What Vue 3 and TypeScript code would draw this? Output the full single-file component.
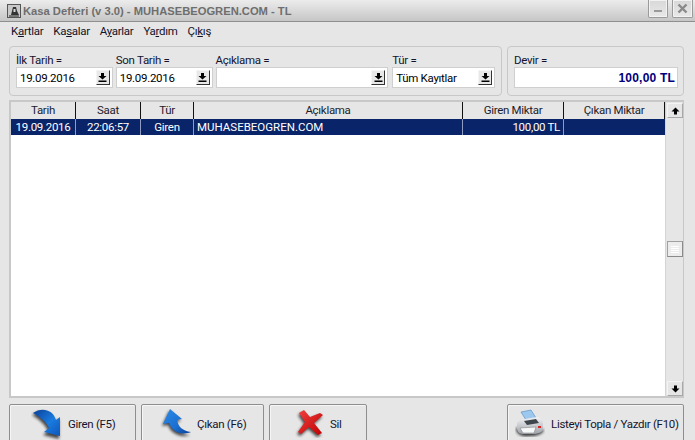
<script setup lang="ts">
const filters = [
  { label: 'İlk Tarih =', value: '19.09.2016', cls: 'f-date' },
  { label: 'Son Tarih =', value: '19.09.2016', cls: 'f-date' },
  { label: 'Açıklama =', value: '', cls: 'f-desc' },
  { label: 'Tür =', value: 'Tüm Kayıtlar', cls: 'f-type' },
]
const menus = [
  ['K', 'a', 'rtlar'],
  ['Ka', 's', 'alar'],
  ['A', 'y', 'arlar'],
  ['Ya', 'r', 'dım'],
  ['Çı', 'k', 'ış'],
]
const cols = [
  { t: 'Tarih', w: 65 },
  { t: 'Saat', w: 65 },
  { t: 'Tür', w: 53 },
  { t: 'Açıklama', w: 269 },
  { t: 'Giren Miktar', w: 101 },
  { t: 'Çıkan Miktar', w: 101 },
]
</script>

<template>
  <div class="win">
    <header class="title">
      <div class="title-left">
        <span class="app-icon">
          <svg width="14" height="14" viewBox="0 0 14 14">
            <rect x="0.5" y="0.5" width="13" height="13" fill="#c9c9c9" stroke="#555" />
            <path d="M4 11 L6 3 H9 L10 7 L12 11 Z" fill="#333" />
            <path d="M6.5 5 H8.5 V8 H6.5 Z" fill="#ddd" />
            <path d="M2 12 H12" stroke="#222" />
          </svg>
        </span>
        <span class="title-text">Kasa Defteri (v 3.0) - MUHASEBEOGREN.COM - TL</span>
      </div>
      <div class="win-btns">
        <span class="win-btn"><i class="min"></i></span>
        <span class="win-btn wide-btn">
          <svg width="11" height="11" viewBox="0 0 11 11"><path d="M1.5 1.5 L9.5 9.5 M9.5 1.5 L1.5 9.5" stroke="#8a8a8a" stroke-width="2.4" /></svg>
        </span>
      </div>
    </header>

    <nav class="menu">
      <span v-for="m in menus" :key="m.join('')" class="menu-item">{{ m[0] }}<u>{{ m[1] }}</u>{{ m[2] }}</span>
    </nav>

    <section class="panels">
      <div class="panel filters">
        <div v-for="f in filters" :key="f.label" class="field" :class="f.cls">
          <label>{{ f.label }}</label>
          <div class="input">
            <span class="val">{{ f.value }}</span>
            <span class="drop">
              <svg width="9" height="9" viewBox="0 0 9 9"><path d="M3 0 H6 V3 H8.5 L4.5 6.5 L0.5 3 H3 Z M0.5 7.5 H8.5 V9 H0.5 Z" fill="#000" /></svg>
            </span>
          </div>
        </div>
      </div>
      <div class="panel devir">
        <label>Devir =</label>
        <div class="input devir-val">100,00 TL</div>
      </div>
    </section>

    <section class="grid">
      <div class="table">
        <div class="row head">
          <div v-for="c in cols" :key="c.t" class="cell" :style="{ width: c.w + 'px' }">{{ c.t }}</div>
        </div>
        <div class="row sel">
          <div class="cell" style="width: 65px">19.09.2016</div>
          <div class="cell" style="width: 65px">22:06:57</div>
          <div class="cell" style="width: 53px">Giren</div>
          <div class="cell left" style="width: 269px">MUHASEBEOGREN.COM</div>
          <div class="cell right" style="width: 101px">100,00 TL</div>
          <div class="cell" style="width: 101px"></div>
        </div>
      </div>
      <div class="scroll">
        <span class="sbtn">
          <svg width="9" height="8" viewBox="0 0 9 8"><path d="M4.5 0.5 L8.5 4.5 H6 V7.5 H3 V4.5 H0.5 Z" fill="#000" /></svg>
        </span>
        <span class="thumb"><i></i><i></i><i></i><i></i></span>
        <span class="sbtn">
          <svg width="9" height="8" viewBox="0 0 9 8"><path d="M4.5 7.5 L8.5 3.5 H6 V0.5 H3 V3.5 H0.5 Z" fill="#000" /></svg>
        </span>
      </div>
    </section>

    <footer class="actions">
      <button class="btn b-giren">
        <svg class="ico" width="34" height="32" viewBox="0 0 34 32">
          <defs>
            <linearGradient id="gb" x1="0" y1="0" x2="1" y2="1">
              <stop offset="0" stop-color="#0a3f96" /><stop offset=".55" stop-color="#1a7be0" /><stop offset="1" stop-color="#0d55b8" />
            </linearGradient>
            <filter id="sh" x="-30%" y="-30%" width="160%" height="160%"><feGaussianBlur stdDeviation="1.4" /></filter>
          </defs>
          <path d="M2 5 C10 -1 22 1 25 12 L29 9 L29 29 L13 25 L18 21 C15 14 9 9 2 5 Z" fill="#000" opacity=".7" filter="url(#sh)" transform="translate(-1 2)" />
          <path d="M2 5 C10 -1 22 1 25 12 L29 9 L29 28 L13 24 L18 20 C15 13 9 9 2 5 Z" fill="url(#gb)" />
        </svg>
        <span>Giren (F5)</span>
      </button>
      <button class="btn b-cikan">
        <svg class="ico" width="34" height="32" viewBox="0 0 34 32">
          <defs>
            <linearGradient id="gc" x1="0" y1="0" x2="1" y2="1">
              <stop offset="0" stop-color="#2a8ae8" /><stop offset=".6" stop-color="#1a6fd0" /><stop offset="1" stop-color="#0a3f96" />
            </linearGradient>
          </defs>
          <path d="M10 1 L3 16 L9 15 C12 23 20 28 31 25 C22 24 18 18 17 12 L22 11 Z" fill="#000" opacity=".7" filter="url(#sh)" transform="translate(-1 2)" />
          <path d="M10 1 L3 16 L9 15 C12 23 20 28 31 24 C22 23 18 18 17 12 L22 11 Z" fill="url(#gc)" />
        </svg>
        <span>Çıkan (F6)</span>
      </button>
      <button class="btn b-sil">
        <svg class="ico" width="30" height="30" viewBox="0 0 30 30">
          <defs>
            <linearGradient id="gr" x1="0" y1="0" x2="1" y2="1">
              <stop offset="0" stop-color="#f04040" /><stop offset="1" stop-color="#c00000" />
            </linearGradient>
          </defs>
          <path d="M4 5 L9 2 L15 9 L25 5 L28 7 L19 15 L27 25 L23 27 L14 19 L6 26 L3 24 L10 14 Z" fill="#000" opacity=".7" filter="url(#sh)" transform="translate(-1 2)" />
          <path d="M4 5 L9 2 L15 9 L25 5 L28 7 L19 15 L27 25 L23 27 L14 19 L6 26 L3 24 L10 14 Z" fill="url(#gr)" />
        </svg>
        <span>Sil</span>
      </button>
      <button class="btn b-print">
        <svg class="ico" width="30" height="28" viewBox="0 0 30 28">
          <defs>
            <linearGradient id="gp" x1="0" y1="0" x2="0" y2="1">
              <stop offset="0" stop-color="#f2f3f5" /><stop offset="1" stop-color="#9ea3aa" />
            </linearGradient>
          </defs>
          <path d="M1 19 C1 26 8 28 15 27 C22 27 27 25 29 21 L15 17 Z" fill="#000" opacity=".75" filter="url(#sh)" />
          <path d="M6 3 L16 1 L21 9 L11 11 Z" fill="#9cc8ee" stroke="#5f93c8" stroke-width=".7" />
          <path d="M2 15 C2 12 6 10 10 10 L22 8 C26 9 28 12 28 15 L28 20 C28 23 23 25 17 25 L8 25 C4 25 2 22 2 19 Z" fill="url(#gp)" />
          <path d="M9 12 L21 10 L24 14 L12 16 Z" fill="#3e454d" />
          <path d="M5 19 L21 18 L19 24 L8 24 Z" fill="#f7f8f9" stroke="#777" stroke-width=".5" />
          <rect x="23" y="17" width="3" height="2" fill="#d22" />
        </svg>
        <span>Listeyi Topla / Yazdır (F10)</span>
      </button>
    </footer>
  </div>
</template>

<style>
html, body { margin: 0; overflow: hidden; background: #e6e6e6; }
</style>

<style scoped>
.win {
  width: 695px;
  height: 440px;
  background: #e6e6e6;
  font-family: Roboto, "Liberation Sans", Arial, sans-serif;
  font-size: 11.5px;
  letter-spacing: -.3px;
  color: #000;
  overflow: hidden;
  display: flex;
  flex-direction: column;
}
.title {
  flex: none;
  height: 21px;
  box-sizing: content-box;
  border-bottom: 1px solid #8f8f8f;
  background: linear-gradient(180deg, #ececec 0, #c6c6c6 100%);
  display: flex;
  justify-content: space-between;
  padding-left: 7px;
  padding-right: 2px;
}
.title-left { display: flex; align-items: center; gap: 2px; }
.app-icon { display: flex; width: 14px; height: 14px; }
.title-text {
  font-family: "Liberation Sans", Arial, sans-serif;
  font-weight: 700;
  font-size: 11.2px;
  letter-spacing: 0;
  color: #6e6e6e;
  white-space: nowrap;
}
.win-btns { display: flex; gap: 4px; align-items: flex-start; }
.win-btn {
  width: 20px;
  height: 18px;
  box-sizing: border-box;
  border: 1px solid #9a9a9a;
  border-top: 0;
  border-radius: 0 0 2px 2px;
  background: linear-gradient(180deg, #d8d8d8, #e8e8e8);
  box-shadow: inset 0 0 0 1px #f2f2f2;
  display: flex;
  align-items: center;
  justify-content: center;
}
.wide-btn { width: 21px; }
.min { display: block; width: 8px; height: 2px; background: #9a9a9a; margin-top: 4px; }
.menu {
  flex: none;
  height: 18px;
  display: flex;
  align-items: center;
  padding-left: 11px;
  gap: 10px;
}
.menu-item { color: #12122a; white-space: nowrap; }
.panels { flex: none; display: flex; gap: 5px; padding: 6px 11px 0 9px; height: 50px; }
.panel {
  box-sizing: border-box;
  height: 50px;
  border: 1px solid #c8c8c8;
  border-radius: 4px;
}
.filters { width: 493px; display: flex; padding: 6px 6px 0; gap: 3px; }
.field { display: flex; flex-direction: column; }
.f-date { width: 97px; }
.f-desc { width: 173px; }
.f-type { width: 103px; margin-left: 1px; }
label { display: block; height: 14px; line-height: 14px; color: #14142e; }
.input {
  box-sizing: border-box;
  height: 21px;
  background: #fff;
  border: 1px solid #cfcfcf;
  display: flex;
  align-items: center;
  justify-content: space-between;
  padding: 0 2px 0 3px;
  white-space: nowrap;
}
.drop {
  width: 14px;
  height: 15px;
  box-sizing: border-box;
  background: #e8e8e8;
  border: 1px solid;
  border-color: #f4f4f4 #333 #333 #f4f4f4;
  display: flex;
  align-items: center;
  justify-content: center;
}
.drop svg { width: 9px; height: 9px; }
.devir { width: 177px; padding: 6px 5px 0 6px; }
.devir-val {
  justify-content: flex-end;
  color: #00007c;
  font-family: "Liberation Sans", Arial, sans-serif;
  font-weight: 700;
  font-size: 12px;
  letter-spacing: .2px;
}
.grid {
  flex: none;
  box-sizing: border-box;
  margin: 4px 11px 0 9px;
  height: 298px;
  border: 2px solid #c8c8c8;
  border-right-width: 1px;
  background: #fff;
  display: flex;
  justify-content: space-between;
}
.table { display: flex; flex-direction: column; }
.row { display: flex; height: 17px; }
.head { background: #e6e6e6; }
.cell {
  box-sizing: border-box;
  text-align: center;
  line-height: 16px;
  white-space: nowrap;
  overflow: hidden;
}
.head .cell { border-right: 1px solid #111; color: #1c1c2a; }
.sel { background: #0a246a; color: #fff; height: 16px; }
.sel .cell { border-right: 1px solid #8d9cc0; }
.sel .cell:last-child { border-right: 0; }
.left { text-align: left; padding-left: 3px; letter-spacing: 0; }
.right { text-align: right; padding-right: 3px; }
.scroll {
  width: 19px;
  background: #e6e6e6;
  border-left: 1px solid #d4d4d4;
  box-sizing: border-box;
  display: flex;
  flex-direction: column;
  align-items: flex-end;
  justify-content: space-between;
}
.sbtn {
  width: 16px;
  height: 15px;
  margin-top: 1px;
  background: #e6e6e6;
  border: 1px solid;
  box-sizing: border-box;
  border-color: #f4f4f4 #a8a8a8 #a8a8a8 #f4f4f4;
  display: flex;
  align-items: center;
  justify-content: center;
}
.thumb {
  box-sizing: border-box;
  width: 16px;
  height: 16px;
  border: 1px solid;
  border-color: #a0a0a0 #8a8a8a #8a8a8a #a0a0a0;
  background: #ececec;
  display: flex;
  flex-direction: column;
  align-items: center;
  justify-content: center;
  gap: 1px;
}
.thumb i { display: block; width: 8px; height: 1px; background: #fff; }
.actions { flex: none; display: flex; gap: 5px; padding: 6px 11px 0 9px; }
.btn {
  box-sizing: border-box;
  height: 40px;
  flex: none;
  border: 1px solid #8e8e8e;
  border-radius: 2px 2px 0 0;
  background: #e6e6e6;
  box-shadow: inset 1px 1px 0 #f6f6f6;
  font: inherit;
  letter-spacing: inherit;
  color: #14142e;
  display: flex;
  align-items: flex-start;
  padding: 1px 0 0;
  white-space: nowrap;
}
.btn span { margin-top: 11px; line-height: 15px; }
.b-giren { width: 127px; padding-left: 21px; }
.b-giren .ico { margin-top: 2px; margin-right: 3px; }
.b-cikan { width: 123px; padding-left: 18px; }
.b-cikan .ico { margin-top: 2px; margin-right: 3px; }
.b-sil { width: 98px; padding-left: 25px; }
.b-sil .ico { margin-top: 2px; margin-right: 5px; }
.b-print { width: 177px; margin-left: 135px; padding-left: 7px; }
.b-print .ico { margin-top: 3px; margin-right: 6px; }
</style>
